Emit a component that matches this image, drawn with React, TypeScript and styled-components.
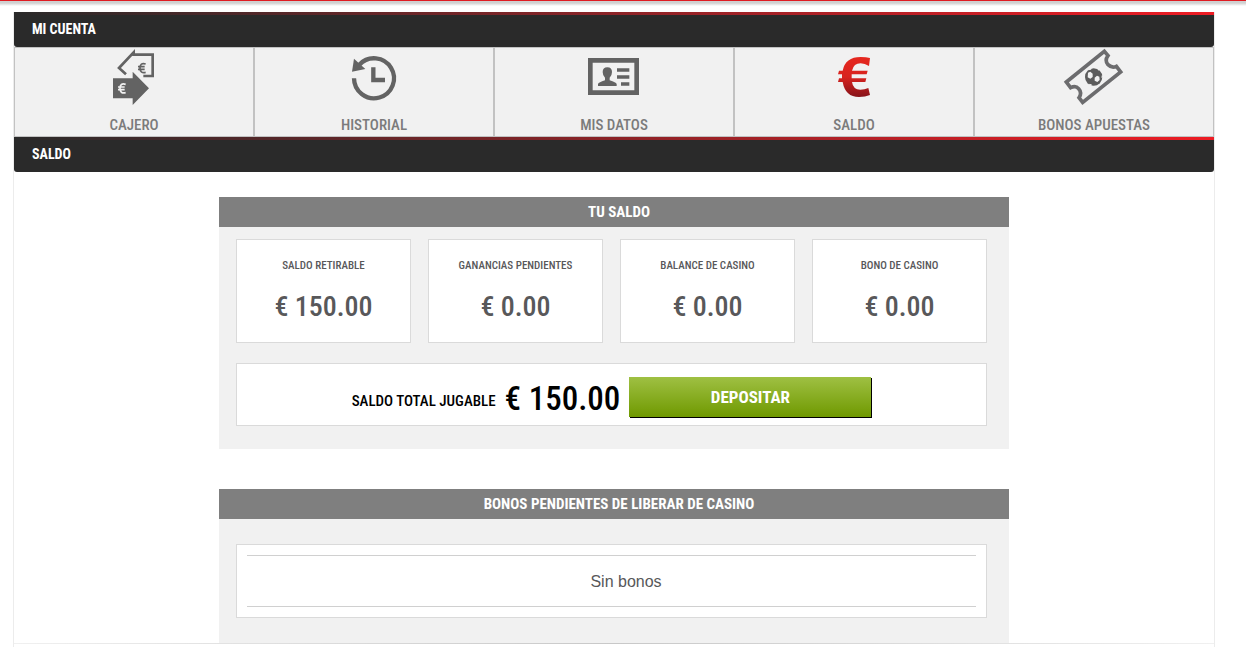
import React from "react";
import styled, { createGlobalStyle } from "styled-components";

const Global = createGlobalStyle`
  *, *::before, *::after { box-sizing: border-box; }
  body {
    margin: 0;
    background: #fff;
    color: #58585a;
    font-family: "Roboto Condensed", "Open Sans Condensed", "Liberation Sans Narrow", "Liberation Sans", sans-serif;
  }
`;

const TopEdge = styled.div`
  height: 12px;
  background: linear-gradient(#e01b22 1px, #d0d0d0 1px, #d0d0d0 3px, #fff 6px);
`;

const Account = styled.main`
  margin: 0 31px 0 13px;
  border: solid #ececec;
  border-width: 0 1px;
`;

const Bar = styled.h1`
  margin: 0;
  height: 35px;
  padding: 3px 18px 0;
  border-radius: 0 0 3px 3px;
  background: linear-gradient(90deg, #2a2a2a, #ed1c24) top / 100% 3px no-repeat, #2a2a2a;
  color: #fff;
  font-size: 14px;
  font-weight: 700;
  line-height: 29px;
`;

const Nav = styled.nav`
  display: grid;
  grid-template-columns: repeat(5, 1fr);
`;

const NavItem = styled.a`
  display: flex;
  flex-direction: column;
  align-items: center;
  justify-content: space-between;
  height: 90px;
  padding-bottom: 1px;
  border: 1px solid #c2c2c2;
  background: #f1f1f1;
  color: #7b7b7b;
  font-size: 15px;
  font-weight: 500;
  line-height: 20px;
  text-decoration: none;
`;

const Icon = styled.svg`
  width: 70px;
  height: 60px;
`;

const Panels = styled.div`
  padding-top: 25px;
`;

const Panel = styled.section`
  width: 100%;
  max-width: 790px;
  margin: 0 auto 40px;
  background: #f1f1f1;
  &:last-child { margin-bottom: 0; }
`;

const PanelTitle = styled.h2`
  margin: 0;
  padding-left: 10px;
  background: #7f7f7f;
  color: #fff;
  font-size: 15px;
  font-weight: 700;
  line-height: 30px;
  text-align: center;
`;

const PanelBody = styled.div<{ $top: number; $bottom: number }>`
  display: grid;
  gap: 20px;
  padding: ${(p) => p.$top}px 22px ${(p) => p.$bottom}px 17px;
`;

const Cards = styled.div`
  display: grid;
  grid-template-columns: repeat(4, 1fr);
  gap: 17px;
`;

const Box = styled.div`
  border: 1px solid #dadada;
  background: #fff;
`;

const Card = styled(Box)`
  height: 104px;
  padding-top: 16px;
  text-align: center;
`;

const CardLabel = styled.div`
  font-size: 11px;
  font-weight: 500;
  line-height: 20px;
`;

const CardValue = styled.div`
  margin-top: 10px;
  font-size: 28px;
  font-weight: 500;
  line-height: 42px;
`;

const TotalRow = styled(Box)`
  display: flex;
  justify-content: center;
  align-items: flex-start;
  gap: 9px;
  height: 63px;
  padding-top: 13px;
  color: #000;
`;

const TotalLabel = styled.span`
  font-size: 15px;
  font-weight: 500;
  line-height: 48px;
`;

const TotalValue = styled.strong`
  font-size: 33px;
  font-weight: 500;
  line-height: 44px;
`;

const Deposit = styled.button`
  width: 242px;
  height: 40px;
  padding: 0;
  border: 0;
  background: linear-gradient(#9fc043, #6f9900);
  box-shadow: 1px 1px 0 #000;
  color: #fff;
  font: inherit;
  font-size: 17px;
  font-weight: 700;
`;

const BonusBox = styled(Box)`
  padding: 10px;
`;

const Empty = styled.p`
  margin: 0;
  border: solid #d0d0d0;
  border-width: 1px 0;
  padding: 1px 0 0 29px;
  font-family: "Liberation Sans", Arial, sans-serif;
  font-size: 16px;
  line-height: 49px;
  text-align: center;
`;

const Footer = styled.div`
  height: 4px;
  background: linear-gradient(90deg, #f0f0f0, #c8c8c8, #f0f0f0) top / 100% 1px no-repeat;
`;

const CashierIcon = () => (
  <Icon viewBox="-3 12 210 180" aria-hidden="true">
    <path d="M78 91 57 72 101 25V32H158V96H130" fill="none" stroke="#636363" strokeWidth="8" />
    <path d="M39 103H98V83L147 133 98 183V163H39Z" fill="#636363" />
    <path d="M137 60Q120 55 120 72T137 85M114 68H134M114 76H134" fill="none" stroke="#636363" strokeWidth="5" />
    <path d="M77 121Q60 116 60 133T77 146M54 129H74M54 137H74" fill="none" stroke="#f1f1f1" strokeWidth="5" />
  </Icon>
);

const HistoryIcon = () => (
  <Icon viewBox="-3 12 210 180" aria-hidden="true">
    <path d="M42 103A60 60 0 1 0 58 62" fill="none" stroke="#636363" strokeWidth="13" />
    <path d="M42 44 36 83 76 75Z" fill="#636363" />
    <path d="M100 70V108H135" fill="none" stroke="#636363" strokeWidth="13" />
  </Icon>
);

const ProfileIcon = () => (
  <Icon viewBox="-3 12 210 180" aria-hidden="true">
    <path d="M31 49H170V146H31Z" fill="none" stroke="#636363" strokeWidth="14" />
    <path d="M54 126V120Q56 115 75 109V101Q68 95 68 84Q68 70 82 70T96 84Q96 95 89 101V109Q108 115 110 120V126Z" fill="#636363" />
    <path d="M111 78H148M111 99H148M123 120H148" stroke="#636363" strokeWidth="11" />
  </Icon>
);

const EuroIcon = () => (
  <Icon viewBox="-3 12 210 180" aria-hidden="true">
    <defs>
      <linearGradient id="euroRed" x1="0" y1="0" x2="0" y2="1">
        <stop offset="0" stopColor="#e5281f" />
        <stop offset=".5" stopColor="#d8231f" />
        <stop offset="1" stopColor="#86131a" />
      </linearGradient>
    </defs>
    <path
      fill="url(#euroRed)"
      d="M150 42 147 66Q134 58 122 58Q101 58 96 80H143L140 91H95V103H139L136 114H96Q99 137 121 137Q134 137 145 132L150 153Q136 159 117 159Q76 159 68 114H54L57 103H66V91H54L57 80H68Q76 39 122 39Q139 39 150 42Z"
    />
  </Icon>
);

const TicketIcon = () => (
  <Icon viewBox="27 24 210 180" aria-hidden="true">
    <path
      d="M49 126 163 34 174 47Q163 62 174 74Q185 85 199 79L212 96 98 187 87 173Q97 158 86 146Q77 136 62 143Z"
      fill="none"
      stroke="#6c6c6e"
      strokeWidth="11"
    />
    <circle cx="131" cy="111" r="26" fill="#5c5c5c" />
    <path d="M114 98 121 95 128 101 128 111 121 116 113 112ZM134 113 141 107 148 110 149 120 142 126 134 122Z" fill="#f1f1f1" />
    <path d="M115 90 121 83 126 86 121 90ZM141 84 149 88 146 92ZM156 104 160 112 154 113ZM115 131 125 133 124 140Z" fill="#f1f1f1" />
  </Icon>
);

const sections = [
  { label: "CAJERO", Glyph: CashierIcon },
  { label: "HISTORIAL", Glyph: HistoryIcon },
  { label: "MIS DATOS", Glyph: ProfileIcon },
  { label: "SALDO", Glyph: EuroIcon },
  { label: "BONOS APUESTAS", Glyph: TicketIcon },
];

const balances = [
  { label: "SALDO RETIRABLE", value: "€ 150.00" },
  { label: "GANANCIAS PENDIENTES", value: "€ 0.00" },
  { label: "BALANCE DE CASINO", value: "€ 0.00" },
  { label: "BONO DE CASINO", value: "€ 0.00" },
];

export default function App() {
  return (
    <>
      <Global />
      <TopEdge />
      <Account>
        <Bar>MI CUENTA</Bar>
        <Nav>
          {sections.map(({ label, Glyph }) => (
            <NavItem key={label} href="#">
              <Glyph />
              {label}
            </NavItem>
          ))}
        </Nav>
        <Bar as="h2">SALDO</Bar>
        <Panels>
          <Panel>
            <PanelTitle as="h3">TU SALDO</PanelTitle>
            <PanelBody $top={12} $bottom={23}>
              <Cards>
                {balances.map(({ label, value }) => (
                  <Card key={label}>
                    <CardLabel>{label}</CardLabel>
                    <CardValue>{value}</CardValue>
                  </Card>
                ))}
              </Cards>
              <TotalRow>
                <TotalLabel>SALDO TOTAL JUGABLE</TotalLabel>
                <TotalValue>€ 150.00</TotalValue>
                <Deposit type="button">DEPOSITAR</Deposit>
              </TotalRow>
            </PanelBody>
          </Panel>
          <Panel>
            <PanelTitle as="h3">BONOS PENDIENTES DE LIBERAR DE CASINO</PanelTitle>
            <PanelBody $top={25} $bottom={25}>
              <BonusBox>
                <Empty>Sin bonos</Empty>
              </BonusBox>
            </PanelBody>
          </Panel>
        </Panels>
        <Footer />
      </Account>
    </>
  );
}
